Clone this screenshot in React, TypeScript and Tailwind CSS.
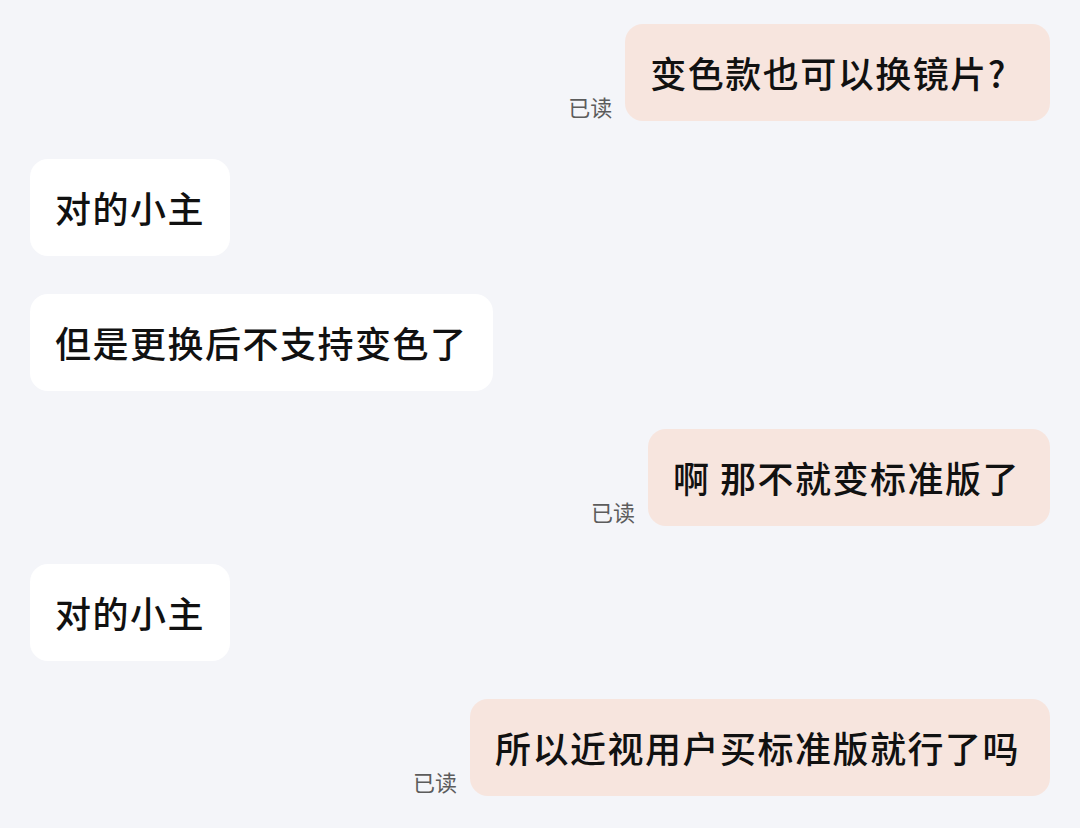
const messages = [
  { me: true, text: "变色款也可以换镜片?", pr: "pr-[43px]" },
  { me: false, text: "对的小主", pr: "pr-[25px]" },
  { me: false, text: "但是更换后不支持变色了", pr: "pr-[25px]" },
  { me: true, text: "啊 那不就变标准版了", pr: "pr-[30px]" },
  { me: false, text: "对的小主", pr: "pr-[25px]" },
  { me: true, text: "所以近视用户买标准版就行了吗", pr: "pr-[30px]" },
]

const font = {
  fontFamily: '"Noto Sans CJK SC", "Noto Sans", sans-serif',
}

export default function App() {
  return (
    <div
      className="w-[1080px] h-[828px] overflow-hidden bg-[#f4f5f9] px-[30px] pt-[24px] flex flex-col gap-[38px]"
      style={font}
    >
      {messages.map((m, i) =>
        m.me ? (
          <div key={i} className="flex items-end justify-end gap-[13px]">
            <span className="text-[22px] leading-[26px] text-[#5c5c5c] mb-[2px]">已读</span>
            <div
              className={`rounded-[18px] bg-[#f7e5de] pl-[25px] py-[24px] text-[36px] leading-[49px] font-medium tracking-[1.5px] text-[#111] ${m.pr}`}
            >
              {m.text}
            </div>
          </div>
        ) : (
          <div key={i} className="flex">
            <div
              className={`rounded-[18px] bg-white pl-[25px] py-[24px] text-[36px] leading-[49px] font-medium tracking-[1.5px] text-[#111] ${m.pr}`}
            >
              {m.text}
            </div>
          </div>
        )
      )}
    </div>
  )
}
